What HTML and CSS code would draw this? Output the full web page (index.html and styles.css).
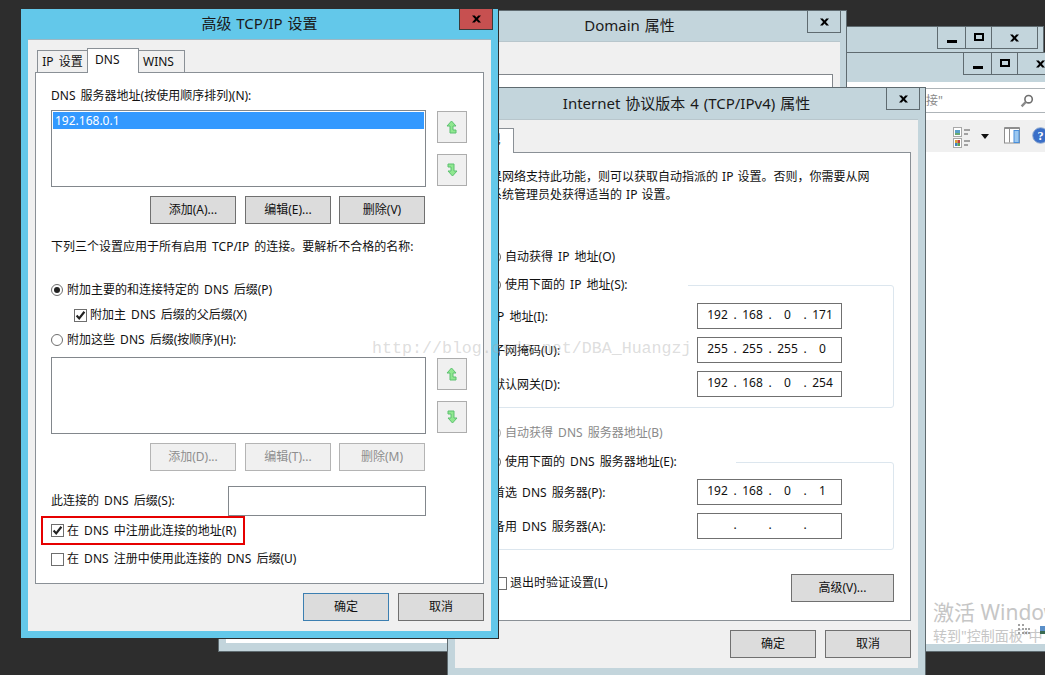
FILE: index.html
```html
<!DOCTYPE html>
<html lang="zh-CN">
<head>
<meta charset="utf-8">
<title>高级 TCP/IP 设置</title>
<link rel="stylesheet" href="styles.css">
</head>
<body>
<div class="desktop">

  <section class="win win-a">
    <div class="caption">
      <div class="capbtns">
        <span class="capbtn cb-min"><i class="ico-min"></i></span>
        <span class="capbtn cb-max"><i class="ico-max"></i></span>
        <span class="capbtn cb-close"><svg class="ico-x" viewBox="0 0 10 8"><path d="M0 0H3L5 2.4 7 0H10L6.6 4 10 8H7L5 5.6 3 8H0L3.4 4Z"/></svg></span>
      </div>
    </div>
  </section>

  <section class="win win-b">
    <div class="caption">
      <div class="capbtns">
        <span class="capbtn cb-min"><i class="ico-min"></i></span>
        <span class="capbtn cb-max"><i class="ico-max"></i></span>
        <span class="capbtn cb-close"><svg class="ico-x" viewBox="0 0 10 8"><path d="M0 0H3L5 2.4 7 0H10L6.6 4 10 8H7L5 5.6 3 8H0L3.4 4Z"/></svg></span>
      </div>
    </div>
    <div class="explorer">
      <div class="searchbar">
        <span class="searchtext">接"</span>
        <svg class="searchicon" viewBox="0 0 14 14"><circle cx="8.6" cy="5.2" r="3.7" fill="none" stroke="#6f6f6f" stroke-width="1.6"/><path d="M5.8 8 1.6 12.4" stroke="#8a8a8a" stroke-width="2.4" fill="none"/></svg>
      </div>
      <div class="toolbar">
        <svg class="tb-view" viewBox="0 0 18 21">
          <rect x=".5" y=".5" width="8" height="9" fill="#fff" stroke="#a8a8a8"/><rect x="2" y="3" width="5" height="3" fill="#5aa0c8"/><rect x="2" y="6" width="5" height="2" fill="#6aa870"/>
          <rect x=".5" y="11.5" width="8" height="9" fill="#fff" stroke="#a8a8a8"/><rect x="2" y="13" width="2.5" height="3" fill="#d8a030"/><rect x="4.5" y="13" width="2.5" height="3" fill="#c04040"/><rect x="2" y="16" width="2.5" height="3" fill="#4080c0"/><rect x="4.5" y="16" width="2.5" height="3" fill="#60a050"/>
          <path d="M11 3H17M11 7H15M11 14H17M11 18H15" stroke="#555" stroke-width="1"/>
        </svg>
        <svg class="tb-drop" viewBox="0 0 8 5"><path d="M0 0H8L4 5Z" fill="#111"/></svg>
        <svg class="tb-pane" viewBox="0 0 16 16"><rect x=".5" y=".5" width="15" height="15" fill="#fff" stroke="#8e8e8e"/><path d="M.5 .5H15.5" stroke="#8e8e8e" stroke-width="2"/><path d="M5.5 1V15" stroke="#8e8e8e"/><rect x="10" y="3" width="5" height="12" fill="#9cc8f0" stroke="#4a90dc"/></svg>
        <svg class="tb-help" viewBox="0 0 18 18"><circle cx="9" cy="9" r="8.3" fill="#3a6fc8" stroke="#9ab0d0"/><text x="9" y="13.5" text-anchor="middle" class="tb-q">?</text></svg>
      </div>
      <div class="exp-body">
        <div class="activation">
          <div class="act-main">激活 Windows</div>
          <div class="act-sub">转到"控制面板"中</div>
        </div>
        <svg class="status-icons" viewBox="0 0 27 12">
          <path d="M0 1H2M4 1H6M0 5H2M4 5H12M0 9H2M4 9H12" stroke="#444" stroke-width="1" stroke-dasharray="2 1"/>
          <rect x="22" y="2" width="5" height="7" fill="#5a8fc8"/><rect x="22" y="7" width="5" height="3" fill="#3a6a50"/>
        </svg>
      </div>
    </div>
  </section>

  <section class="win win-domain">
    <div class="caption cap-domain">
      <h2 class="captitle">Domain 属性</h2>
      <span class="capbtn cb-solo"><svg class="ico-x" viewBox="0 0 10 8"><path d="M0 0H3L5 2.4 7 0H10L6.6 4 10 8H7L5 5.6 3 8H0L3.4 4Z"/></svg></span>
    </div>
    <div class="domain-client">
      <div class="domain-panel"></div>
    </div>
  </section>

  <section class="win win-ipv4">
    <div class="caption cap-ipv4">
      <h2 class="captitle">Internet 协议版本 4 (TCP/IPv4) 属性</h2>
      <span class="capbtn cb-solo"><svg class="ico-x" viewBox="0 0 10 8"><path d="M0 0H3L5 2.4 7 0H10L6.6 4 10 8H7L5 5.6 3 8H0L3.4 4Z"/></svg></span>
    </div>
    <div class="client">
      <div class="tabs tabs-ipv4"><span class="tab tab-on tab-general">常规</span></div>
      <div class="panel panel-ipv4">
        <p class="intro">如果网络支持此功能，则可以获取自动指派的 IP 设置。否则，你需要从网<br>络系统管理员处获得适当的 IP 设置。</p>
        <label class="opt opt-auto"><i class="radio"></i>自动获得 IP 地址(O)</label>
        <div class="group group-ip">
          <label class="opt legend legend-ip"><i class="radio radio-on"></i>使用下面的 IP 地址(S):</label>
          <div class="fieldrow first"><span>IP 地址(I):</span>
            <div class="ipfield"><b>192</b><u>.</u><b>168</b><u>.</u><b>0</b><u>.</u><b>171</b></div></div>
          <div class="fieldrow"><span>子网掩码(U):</span>
            <div class="ipfield"><b>255</b><u>.</u><b>255</b><u>.</u><b>255</b><u>.</u><b>0</b></div></div>
          <div class="fieldrow"><span>默认网关(D):</span>
            <div class="ipfield"><b>192</b><u>.</u><b>168</b><u>.</u><b>0</b><u>.</u><b>254</b></div></div>
        </div>
        <label class="opt opt-dnsauto dim"><i class="radio radio-dim"></i>自动获得 DNS 服务器地址(B)</label>
        <div class="group group-dns">
          <label class="opt legend legend-dns"><i class="radio radio-on"></i>使用下面的 DNS 服务器地址(E):</label>
          <div class="fieldrow first"><span>首选 DNS 服务器(P):</span>
            <div class="ipfield"><b>192</b><u>.</u><b>168</b><u>.</u><b>0</b><u>.</u><b>1</b></div></div>
          <div class="fieldrow"><span>备用 DNS 服务器(A):</span>
            <div class="ipfield"><b></b><u>.</u><b></b><u>.</u><b></b><u>.</u><b></b></div></div>
        </div>
        <div class="exitrow">
          <label class="opt"><i class="check"></i>退出时验证设置(L)</label>
          <button class="btn btn-adv">高级(V)...</button>
        </div>
      </div>
      <div class="footer">
        <button class="btn">确定</button>
        <button class="btn">取消</button>
      </div>
    </div>
  </section>

  <section class="win win-main">
    <div class="caption cap-main">
      <h2 class="captitle">高级 TCP/IP 设置</h2>
      <span class="capbtn cb-red"><svg class="ico-x" viewBox="0 0 10 8"><path d="M0 0H3L5 2.4 7 0H10L6.6 4 10 8H7L5 5.6 3 8H0L3.4 4Z"/></svg></span>
    </div>
    <div class="client">
      <div class="tabs">
        <span class="tab tab-ip">IP 设置</span>
        <span class="tab tab-on tab-dns">DNS</span>
        <span class="tab tab-wins">WINS</span>
      </div>
      <div class="panel panel-main">
        <div class="line line-first">DNS 服务器地址(按使用顺序排列)(N):</div>
        <div class="listrow">
          <div class="listbox"><div class="listsel">192.168.0.1</div></div>
          <div class="arrows">
            <span class="arrowbtn"><svg viewBox="0 0 30 32"><path class="arrowshape" d="M14.5 10 19 15H16V19H19V22H13V15H10Z"/></svg></span>
            <span class="arrowbtn"><svg viewBox="0 0 30 32"><path class="arrowshape" d="M11 10H17V17H20L15.5 22 11 17H14V13H11Z"/></svg></span>
          </div>
        </div>
        <div class="btnrow">
          <button class="btn">添加(A)...</button>
          <button class="btn">编辑(E)...</button>
          <button class="btn">删除(V)</button>
        </div>
        <div class="line line-note">下列三个设置应用于所有启用 TCP/IP 的连接。要解析不合格的名称:</div>
        <label class="opt opt-p"><i class="radio radio-on"></i>附加主要的和连接特定的 DNS 后缀(P)</label>
        <label class="opt opt-x"><i class="check check-on"><svg viewBox="0 0 13 13"><path d="M2.6 6.6 5.2 9.4 10.4 2.8" fill="none" stroke="#222" stroke-width="2.2"/></svg></i>附加主 DNS 后缀的父后缀(X)</label>
        <label class="opt opt-h"><i class="radio"></i>附加这些 DNS 后缀(按顺序)(H):</label>
        <div class="listrow listrow-2">
          <div class="listbox"></div>
          <div class="arrows arrows-2">
            <span class="arrowbtn"><svg viewBox="0 0 30 32"><path class="arrowshape" d="M14.5 10 19 15H16V19H19V22H13V15H10Z"/></svg></span>
            <span class="arrowbtn"><svg viewBox="0 0 30 32"><path class="arrowshape" d="M11 10H17V17H20L15.5 22 11 17H14V13H11Z"/></svg></span>
          </div>
        </div>
        <div class="btnrow">
          <button class="btn btn-off">添加(D)...</button>
          <button class="btn btn-off">编辑(T)...</button>
          <button class="btn btn-off">删除(M)</button>
        </div>
        <div class="suffixrow">
          <span>此连接的 DNS 后缀(S):</span>
          <div class="textinput"></div>
        </div>
        <label class="opt hl"><i class="check check-on"><svg viewBox="0 0 13 13"><path d="M2.6 6.6 5.2 9.4 10.4 2.8" fill="none" stroke="#222" stroke-width="2.2"/></svg></i>在 DNS 中注册此连接的地址(R)</label>
        <label class="opt opt-u"><i class="check"></i>在 DNS 注册中使用此连接的 DNS 后缀(U)</label>
      </div>
      <div class="footer footer-main">
        <button class="btn btn-def">确定</button>
        <button class="btn">取消</button>
      </div>
    </div>
  </section>

  <div class="watermark">http://blog.csdn.net/DBA_Huangzj</div>
</div>
</body>
</html>
```
FILE: styles.css
```css
* { box-sizing: border-box; }
html, body { margin: 0; height: 100%; }
body { background: #2d2d2d; overflow: hidden; }
.desktop {
  position: relative;
  width: 1045px;
  height: 675px;
  overflow: hidden;
  font-family: "Noto Sans", "Noto Sans CJK SC", sans-serif;
  font-size: 12px;
  line-height: 16px;
  word-spacing: 2px;
  color: #111;
}

/* windows on the desktop */
.win { position: absolute; z-index: 0; background: #c3d5dc; border: 1px solid #5f6b70; }
.win-a { left: 700px; top: 26px; width: 344px; height: 60px; }
.win-b { left: 700px; top: 52px; width: 380px; height: 600px; }
.win-domain { left: 218px; top: 10px; width: 629px; height: 642px; }
.win-ipv4 { left: 447px; top: 87px; width: 479px; height: 600px; }
.win-main { left: 20px; top: 8px; width: 479px; height: 631px; background: #63c8ea; border-color: #2d2d2d; }

/* caption */
.caption { display: flex; justify-content: center; align-items: center; position: relative; word-spacing: 1px; }
.captitle { margin: 0 0 2px; font-size: 15px; font-weight: 400; color: #1a1a1a; line-height: 20px; }
.cap-main { height: 30px; }
.cap-ipv4 { height: 31px; }
.cap-domain { height: 30px; padding-left: 194px; }
.win-a .caption, .win-b .caption { height: 29px; display: block; }
.capbtns { display: flex; height: 22px; }
.win-a .capbtns { margin-left: 237px; }
.win-b .capbtns { margin-left: 263px; }
.capbtn { display: flex; align-items: center; justify-content: center; height: 22px; border: 1px solid #5f6b70; border-top: 0; margin-left: -1px; }
.cb-min { width: 29px; }
.cb-max { width: 27px; }
.cb-close { width: 47px; }
.cb-solo { position: absolute; right: 5px; top: 0; width: 34px; height: 22px; }
.cb-red { position: absolute; right: 5px; top: 0; width: 34px; height: 21px; background: #c75050; border-color: #3a3a3a; }
.ico-x { width: 9px; height: 8px; fill: #000; }
.ico-min { display: block; width: 10px; height: 3px; background: #000; margin-top: 8px; }
.ico-max { display: block; width: 10px; height: 8px; border: 2px solid #000; margin-top: -1px; }

/* client + panels */
.client { margin: 0 7px; background: #f0f0f0; border-top: 1px solid #b8c6cc; padding: 8px 7px 0; }
.win-main .client { height: 592px; border-top-color: #9fb7c2; }
.win-ipv4 .client { height: 549px; }
.tabs { display: flex; height: 24px; padding-left: 2px; }
.tab { height: 22px; margin-top: 2px; margin-left: -1px; border: 1px solid #8a9096; border-bottom: 0; background: #f0f0f0; text-align: center; line-height: 22px; }
.tab-ip { width: 51px; margin-left: 0; }
.tab-wins { width: 47px; padding-left: 4px; text-align: left; }
.tab-on { position: relative; z-index: 2; height: 25px; margin-top: 0; background: #fff; line-height: 22px; }
.tab-dns { width: 52px; padding-left: 7px; text-align: left; }
.tab-general { width: 51px; }
.panel { background: #fff; border: 1px solid #8a9096; }
.panel-main { height: 512px; padding: 15px 0 0 15px; }
.panel-ipv4 { height: 469px; padding-top: 15px; }
.footer { display: flex; justify-content: flex-end; gap: 9px; margin-top: 9px; }

/* controls */
.btn { display: block; width: 86px; height: 28px; padding: 0; border: 1px solid #707070; background: #dcdcdc; font: inherit; color: #111; }
.btn-def { border-color: #3c7fb1; }
.btn-off { border-color: #b4b4b4; background: #f0f0f0; color: #8e8e8e; }
.opt { display: flex; align-items: center; height: 16px; white-space: nowrap; }
.radio { display: block; flex: none; width: 12px; height: 12px; border: 1px solid #6e6e6e; border-radius: 50%; background: #fff; margin-right: 4px; position: relative; }
.radio-on::after { content: ""; position: absolute; inset: 2px; border-radius: 50%; background: #222; }
.radio-dim { border-color: #b0b0b0; }
.check { display: block; flex: none; width: 13px; height: 13px; border: 1px solid #6e6e6e; background: #fff; margin-right: 3px; position: relative; }
.check svg { position: absolute; left: -1px; top: -1px; width: 13px; height: 13px; }
.dim { color: #8a8a8a; }

/* main dialog */
.line { white-space: nowrap; }
.listrow { display: flex; gap: 11px; margin-top: 6px; }
.listrow-2 { margin-top: 9px; }
.listbox { width: 375px; height: 77px; border: 1px solid #82878c; background: #fff; padding: 1px; }
.listsel { height: 17px; background: #3399ff; color: #fff; padding-left: 2px; line-height: 17px; }
.arrows { display: flex; flex-direction: column; gap: 11px; padding-top: 1px; }
.arrowbtn { display: block; width: 30px; height: 32px; border: 1px solid #adadad; background: #f0f0f0; }
.arrowbtn svg { display: block; width: 30px; height: 32px; margin: -1px; }
.arrowshape { fill: #8fe88f; stroke: #5cc070; stroke-width: 1; }
.btnrow { display: flex; gap: 9px; margin: 9px 0 0 99px; }
.btnrow .btn:last-child { margin-left: -1px; }
.line-note { margin-top: 15px; }
.opt-p { margin-top: 27px; }
.opt-x { margin: 9px 0 0 23px; }
.opt-h { margin-top: 9px; }
.suffixrow { display: flex; justify-content: space-between; align-items: center; width: 375px; height: 30px; margin-top: 15px; }
.textinput { width: 198px; height: 30px; border: 1px solid #82878c; background: #fff; }
.hl { width: 204px; height: 29px; margin-left: -10px; padding-left: 8px; border: 2px solid #e60000; }
.opt-u { margin-top: 6px; }

/* ipv4 dialog */
.intro { margin: 0 0 0 15px; line-height: 18px; white-space: nowrap; word-spacing: 1px; }
.opt-auto { margin: 45px 0 0 26px; }
.group { position: relative; width: 416px; margin-left: 15px; border: 1px solid #dce6ee; border-radius: 3px; background: #fff; padding: 0 51px 10px 14px; }
.group-ip { margin-top: 20px; }
.group-dns { margin-top: 21px; }
.legend { position: relative; margin: -9px 0 0 -15px; padding-left: 11px; background: #fff; }
.legend-ip { width: 210px; }
.legend-dns { width: 258px; }
.fieldrow { display: flex; justify-content: space-between; align-items: center; height: 26px; margin-top: 8px; }
.fieldrow.first { margin-top: 10px; }
.group-dns .fieldrow.first { margin-top: 9px; }
.fieldrow > span { margin-top: 2px; }
.ipfield { display: flex; width: 145px; height: 26px; border: 1px solid #707070; padding: 0 0 3px 4px; align-items: center; background: #fff; }
.ipfield b { display: block; width: 31px; font-weight: 400; text-align: center; }
.ipfield u { display: block; width: 4px; text-align: center; text-decoration: none; }
.opt-dnsauto { margin: 17px 0 0 26px; }
.exitrow { display: flex; justify-content: space-between; align-items: flex-start; width: 416px; margin: 24px 0 0 15px; padding-left: 16px; }
.exitrow .opt { margin-top: 1px; }
.btn-adv { width: 103px; }

/* explorer */
.explorer { background: #fff; height: 562px; padding-top: 6px; }
.searchbar { height: 25px; border-top: 1px solid #aeb4b8; border-bottom: 1px solid #aeb4b8; display: flex; align-items: center; justify-content: space-between; padding: 0 45px 0 225px; background: #fff; }
.searchtext { color: #8a8a8a; }
.searchicon { width: 14px; height: 14px; }
.toolbar { display: flex; align-items: flex-start; height: 32px; margin-top: 7px; padding: 7px 0 0 252px; background: #f0f0f0; }
.tb-view { width: 18px; height: 21px; }
.tb-drop { width: 8px; height: 5px; margin: 7px 0 0 10px; }
.tb-pane { width: 16px; height: 17px; margin-left: 15px; }
.tb-help { width: 17px; height: 17px; margin: 0 0 0 12px; }
.tb-q { font: 700 13px "Liberation Serif", serif; fill: #fff; }
.exp-body { position: relative; height: 492px; background: #fff; padding: 447px 0 0 232px; }
.activation { color: #c6c6c6; white-space: nowrap; word-spacing: 0; }
.act-main { font-size: 21px; line-height: 26px; }
.act-sub { font-size: 14px; line-height: 18px; margin-top: 2px; }
.status-icons { position: absolute; left: 317px; top: 472px; width: 27px; height: 12px; }

/* domain */
.domain-client { margin: 0 6px 0 7px; height: 602px; background: #f0f0f0; border-top: 1px solid #b8c6cc; padding: 32px 7px 0 0; }
.domain-panel { height: 569px; background: #fff; border-top: 1px solid #82878c; border-right: 1px solid #82878c; }

.watermark {
  position: absolute;
  left: 372px;
  top: 339px;
  font: 16.65px/20px "Liberation Mono", monospace;
  color: rgba(170, 170, 170, 0.4);
  white-space: nowrap;
  word-spacing: 0;
}
```
